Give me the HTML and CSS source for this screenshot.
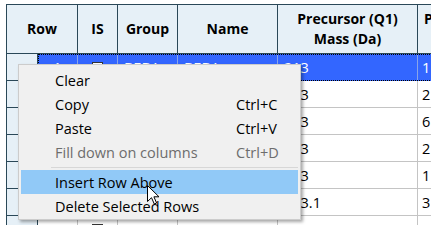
FILE: index.html
```html
<!DOCTYPE html>
<html>
<head>
<meta charset="utf-8">
<link rel="stylesheet" href="styles.css">
</head>
<body>
<div class="page">
  <div class="grid">
    <div class="head">
      <div class="hc c-row">Row</div>
      <div class="hc c-is">IS</div>
      <div class="hc c-grp">Group</div>
      <div class="hc c-name">Name</div>
      <div class="hc c-pre">Precursor (Q1)<br>Mass (Da)</div>
      <div class="hc c-last"><span class="hl">Product (Q3)<br>Mass (Da)</span></div>
    </div>
    <div class="row sel">
      <div class="rh"></div>
      <div class="cells">
        <div class="dc c-num">1</div>
        <div class="dc c-is"><span class="cb"></span></div>
        <div class="dc c-grp">BEBA</div>
        <div class="dc c-name">BEBA</div>
        <div class="dc c-pre">213</div>
        <div class="dc c-last">1</div>
      </div>
    </div>
    <div class="row">
      <div class="rh"></div>
      <div class="cells">
        <div class="dc c-num">2</div>
        <div class="dc c-is"><span class="cb"></span></div>
        <div class="dc c-grp">BEBA</div>
        <div class="dc c-name">BEBA_2</div>
        <div class="dc c-pre">213</div>
        <div class="dc c-last">2</div>
      </div>
    </div>
    <div class="row">
      <div class="rh"></div>
      <div class="cells">
        <div class="dc c-num">3</div>
        <div class="dc c-is"><span class="cb"></span></div>
        <div class="dc c-grp">BEBA</div>
        <div class="dc c-name">BEBA_3</div>
        <div class="dc c-pre">213</div>
        <div class="dc c-last">6</div>
      </div>
    </div>
    <div class="row">
      <div class="rh"></div>
      <div class="cells">
        <div class="dc c-num">4</div>
        <div class="dc c-is"><span class="cb"></span></div>
        <div class="dc c-grp">BEBA</div>
        <div class="dc c-name">BEBA_4</div>
        <div class="dc c-pre">213</div>
        <div class="dc c-last">2</div>
      </div>
    </div>
    <div class="row">
      <div class="rh"></div>
      <div class="cells">
        <div class="dc c-num">5</div>
        <div class="dc c-is"><span class="cb"></span></div>
        <div class="dc c-grp">BEBA</div>
        <div class="dc c-name">BEBA_5</div>
        <div class="dc c-pre">213</div>
        <div class="dc c-last">1</div>
      </div>
    </div>
    <div class="row">
      <div class="rh"></div>
      <div class="cells">
        <div class="dc c-num">6</div>
        <div class="dc c-is"><span class="cb"></span></div>
        <div class="dc c-grp">BEH_A</div>
        <div class="dc c-name">BEH_A</div>
        <div class="dc c-pre">253.1</div>
        <div class="dc c-last">3</div>
      </div>
    </div>
    <div class="row">
      <div class="rh"></div>
      <div class="cells">
        <div class="dc c-num">7</div>
        <div class="dc c-is"><span class="cb"></span></div>
        <div class="dc c-grp">BEH_A</div>
        <div class="dc c-name">BEH_A_2</div>
        <div class="dc c-pre">253.1</div>
        <div class="dc c-last">1</div>
      </div>
    </div>
  </div>

  <div class="menu">
    <div class="item"><span>Clear</span><span></span></div>
    <div class="item"><span>Copy</span><span>Ctrl+C</span></div>
    <div class="item"><span>Paste</span><span>Ctrl+V</span></div>
    <div class="item disabled"><span>Fill down on columns</span><span>Ctrl+D</span></div>
    <div class="sep"></div>
    <div class="item hover"><span>Insert Row Above</span><span></span></div>
    <div class="item"><span>Delete Selected Rows</span><span></span></div>
  </div>

  <svg class="cursor" width="13" height="20" viewBox="0 0 13 20">
    <path d="M0.5 0.5 L0.5 16.5 L4.5 12.7 L7.3 19 L9.6 18 L6.9 11.8 L12 11.8 Z" fill="#fff" stroke="#000" stroke-width="1" stroke-linejoin="miter"/>
  </svg>
</div>
</body>
</html>
```

FILE: styles.css
```css
html, body {
  margin: 0;
  padding: 0;
  background: #fff;
}

.page {
  position: relative;
  width: 431px;
  height: 225px;
  overflow: hidden;
  font-family: "Open Sans", "Noto Sans", sans-serif;
  font-size: 14.5px;
  color: #000;
}

.grid {
  margin: 4px 0 0 6px;
  border-left: 1px solid #2a4858;
  border-top: 1px solid #2a4858;
  width: 600px;
}

.head {
  display: flex;
  height: 48px;
  background: #e6f0f7;
  border-bottom: 1px solid #2a4858;
}

.hc {
  display: flex;
  align-items: center;
  justify-content: center;
  text-align: center;
  font-weight: bold;
  font-size: 14px;
  line-height: 20px;
  border-right: 1px solid #2a4858;
  box-sizing: border-box;
  flex: none;
}

.head .c-row { width: 71px; }
.c-is { width: 40px; }
.c-grp { width: 60px; }
.c-name { width: 100px; }
.c-pre { width: 140px; }
.c-num { width: 40px; }
.head .c-last {
  width: 160px;
  justify-content: flex-start;
  padding-left: 6px;
  border-right: none;
}
.hl {
  display: block;
  text-align: center;
  white-space: nowrap;
}

.row {
  display: flex;
  height: 27px;
}

.rh {
  width: 31px;
  flex: none;
  box-sizing: border-box;
  background: #e6f0f7;
  border-right: 1px solid #2a4858;
  border-bottom: 1px solid #2a4858;
}

.cells {
  display: flex;
  flex: none;
}

.dc {
  flex: none;
  box-sizing: border-box;
  height: 27px;
  border-right: 1px solid #c4c4c4;
  border-bottom: 1px solid #c4c4c4;
  display: flex;
  align-items: center;
  padding-left: 6px;
  white-space: nowrap;
  overflow: hidden;
}

.dc.c-num { justify-content: center; padding-left: 0; }
.dc.c-is { justify-content: center; padding-left: 0; }
.dc.c-last { width: 80px; padding-left: 4px; border-right: none; }

.cb {
  display: block;
  width: 11px;
  height: 11px;
  box-sizing: border-box;
  background: #fff;
  border: 1px solid #333;
}

.sel .dc {
  background: #3366ff;
  color: #fff;
  border-right-color: #8aa4e8;
  border-bottom-color: #3366ff;
}

.sel .cells {
  outline: 1px dotted #000;
  outline-offset: -1px;
}

.menu {
  position: absolute;
  left: 18px;
  top: 64px;
  width: 283px;
  box-sizing: border-box;
  background: #f0f0f0;
  border: 1px solid #cccccc;
  padding: 3px 0 1px;
  box-shadow: 2px 2px 3px rgba(0, 0, 0, 0.35);
}

.item {
  display: grid;
  grid-template-columns: 181px auto;
  height: 24px;
  align-items: center;
  margin: 0 2px;
  padding-left: 34px;
  white-space: nowrap;
}

.item.disabled { color: #6d6d6d; }
.item.hover { background: #91c9f7; }

.sep {
  height: 6px;
  margin-left: 32px;
  margin-right: 2px;
  display: flex;
  align-items: center;
}
.sep::before {
  content: "";
  display: block;
  width: 100%;
  height: 1px;
  background: #d7d7d7;
}

.cursor {
  position: absolute;
  left: 147px;
  top: 185px;
}
```
